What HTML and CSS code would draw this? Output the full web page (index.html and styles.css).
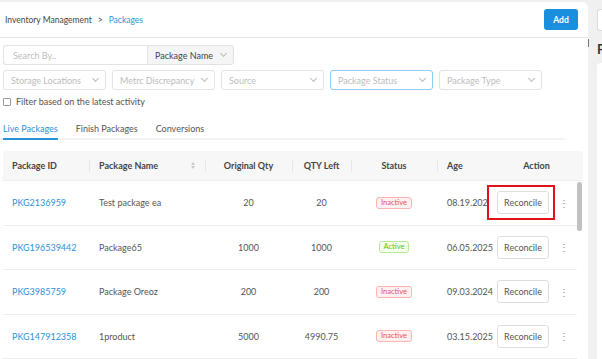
FILE: index.html
```html
<!DOCTYPE html>
<html>
<head>
<meta charset="utf-8">
<link rel="stylesheet" href="styles.css">
</head>
<body>
<div class="app">
  <main class="card">
    <header class="topbar">
      <div class="crumbs"><span>Inventory Management</span><span class="sep">&gt;</span><span class="current">Packages</span></div>
      <button class="btn-primary">Add</button>
    </header>

    <section class="filters">
      <div class="search-row">
        <div class="search-input">Search By..</div>
        <div class="search-select">Package Name <span class="chev"></span></div>
      </div>
      <div class="select-row">
        <div class="select">Storage Locations <span class="chev"></span></div>
        <div class="select">Metrc Discrepancy <span class="chev"></span></div>
        <div class="select">Source <span class="chev"></span></div>
        <div class="select focused">Package Status <span class="chev"></span></div>
        <div class="select">Package Type <span class="chev"></span></div>
      </div>
      <label class="check-row"><span class="checkbox"></span>Filter based on the latest activity</label>
    </section>

    <nav class="tabs">
      <span class="tab active">Live Packages</span>
      <span class="tab">Finish Packages</span>
      <span class="tab">Conversions</span>
    </nav>

    <div class="table-wrap">
      <div class="thead">
        <div class="th c-id">Package ID</div>
        <div class="th c-name">Package Name <span class="sorter"><i class="up"></i><i class="down"></i></span></div>
        <div class="th c-orig center">Original Qty</div>
        <div class="th c-left center">QTY Left</div>
        <div class="th c-status center">Status</div>
        <div class="th c-age">Age</div>
        <div class="th c-action center">Action</div>
      </div>
      <div class="tbody">
        <div class="rows">
          <div class="tr">
            <div class="td c-id link">PKG2136959</div>
            <div class="td c-name">Test package ea</div>
            <div class="td c-orig center">20</div>
            <div class="td c-left center">20</div>
            <div class="td c-status center"><span class="badge inactive">Inactive</span></div>
            <div class="td c-age">08.19.2024</div>
            <div class="td c-action"><span class="highlight"></span><button class="btn">Reconcile</button><span class="kebab">&#8942;</span></div>
          </div>
          <div class="tr">
            <div class="td c-id link">PKG196539442</div>
            <div class="td c-name">Package65</div>
            <div class="td c-orig center">1000</div>
            <div class="td c-left center">1000</div>
            <div class="td c-status center"><span class="badge active">Active</span></div>
            <div class="td c-age">06.05.2025</div>
            <div class="td c-action"><button class="btn">Reconcile</button><span class="kebab">&#8942;</span></div>
          </div>
          <div class="tr">
            <div class="td c-id link">PKG3985759</div>
            <div class="td c-name">Package Oreoz</div>
            <div class="td c-orig center">200</div>
            <div class="td c-left center">200</div>
            <div class="td c-status center"><span class="badge inactive">Inactive</span></div>
            <div class="td c-age">09.03.2024</div>
            <div class="td c-action"><button class="btn">Reconcile</button><span class="kebab">&#8942;</span></div>
          </div>
          <div class="tr">
            <div class="td c-id link">PKG147912358</div>
            <div class="td c-name">1product</div>
            <div class="td c-orig center">5000</div>
            <div class="td c-left center">4990.75</div>
            <div class="td c-status center"><span class="badge inactive">Inactive</span></div>
            <div class="td c-age">03.15.2025</div>
            <div class="td c-action"><button class="btn">Reconcile</button><span class="kebab">&#8942;</span></div>
          </div>
        </div>
        <div class="scrollbar"><div class="thumb"></div></div>
      </div>
    </div>
  </main>
  <div class="gutter"><span class="handle"></span></div>
  <aside class="side">
    <div class="side-input"></div>
    <div class="side-title">P</div>
    <div class="side-panel"></div>
  </aside>
</div>
</body>
</html>
```

FILE: styles.css
```css
* { box-sizing: border-box; }
html, body { margin: 0; padding: 0; }
body {
  background: #f0f0f0;
  font-family: "Lato", "Open Sans", sans-serif;
  font-size: 9px;
  color: #555;
  width: 602px;
  height: 359px;
  overflow: hidden;
}
.app {
  display: flex;
  height: 359px;
  padding-top: 2px;
}
.card {
  width: 588px;
  flex: none;
  background: #fff;
  border-top-right-radius: 6px;
  display: flex;
  flex-direction: column;
}
.topbar {
  height: 36px;
  display: flex;
  align-items: center;
  justify-content: space-between;
  padding: 0 10px 0 5px;
  border-bottom: 1px solid #e6e6e6;
}
.crumbs { display: flex; gap: 6px; color: #444; font-size: 8.5px; }
.crumbs .current { color: #2a93dc; }
.btn-primary {
  width: 34px;
  height: 21px;
  border: none;
  border-radius: 3px;
  background: #1a8fdd;
  color: #fff;
  font-family: inherit;
  font-size: 8.5px;
  font-weight: 700;
  padding: 0;
}
.filters {
  padding: 7px 3px 0;
  display: flex;
  flex-direction: column;
}
.search-row { display: flex; height: 20px; }
.search-input {
  width: 144px;
  border: 1px solid #e3e3e3;
  border-right: none;
  border-radius: 3px 0 0 3px;
  color: #bdbdbd;
  padding: 0 9px;
  display: flex;
  align-items: center;
}
.search-select {
  width: 87px;
  background: #f5f5f5;
  border: 1px solid #e3e3e3;
  border-radius: 0 3px 3px 0;
  color: #444;
  padding: 0 7px 0 7px;
  display: flex;
  align-items: center;
  justify-content: space-between;
}
.select-row { display: flex; gap: 6px; margin-top: 5px; }
.select {
  width: 103px;
  height: 20px;
  border: 1px solid #e3e3e3;
  border-radius: 3px;
  color: #bdbdbd;
  padding: 0 7px;
  display: flex;
  align-items: center;
  justify-content: space-between;
}
.select.focused { border-color: #8fcaf0; }
.chev {
  width: 5px;
  height: 5px;
  border-right: 1px solid #bbb;
  border-bottom: 1px solid #bbb;
  transform: rotate(45deg);
  margin-top: -3px;
}
.check-row {
  display: flex;
  align-items: center;
  gap: 5px;
  margin-top: 6px;
  height: 11px;
  color: #555;
}
.checkbox {
  width: 8px;
  height: 8px;
  border: 1px solid #999;
  border-radius: 1px;
}
.tabs {
  margin-top: 14px;
  margin-right: 23px;
  display: flex;
  gap: 18px;
  padding-left: 3px;
  border-bottom: 2px solid #f2f2f2;
  height: 19px;
}
.tab { color: #555; line-height: 15px; }
.tab.active {
  color: #2a93dc;
  border-bottom: 2px solid #2a93dc;
  margin-bottom: -2px;
}
.table-wrap {
  margin: 11px 5px 0 3px;
  display: flex;
  flex-direction: column;
}
.thead {
  display: flex;
  height: 30px;
  background: #f7f7f7;
  border-radius: 3px 3px 0 0;
  color: #444;
  font-weight: 700;
  border-bottom: 1px solid #f0f0f0;
}
.th {
  display: flex;
  align-items: center;
  position: relative;
}
.th.center { justify-content: center; }
.th + .th::before {
  content: "";
  position: absolute;
  left: 0;
  top: 9px;
  height: 12px;
  border-left: 1px solid #e6e6e6;
}
.th.c-action::before { display: none; }
.c-id { width: 86px; padding-left: 9px; flex: none; }
.c-name { width: 116px; padding-left: 10px; flex: none; }
.th.c-name { justify-content: space-between; padding-right: 10px; }
.c-orig { width: 87px; flex: none; }
.c-left { width: 59px; flex: none; }
.c-status { width: 86px; flex: none; }
.c-age { width: 53px; padding-left: 10px; flex: none; white-space: nowrap; }
.c-action { flex: 1; }
.sorter { display: flex; flex-direction: column; gap: 1px; }
.sorter i {
  width: 0;
  height: 0;
  border-left: 2.5px solid transparent;
  border-right: 2.5px solid transparent;
}
.sorter .up { border-bottom: 3px solid #c8c8c8; }
.sorter .down { border-top: 3px solid #c8c8c8; }
.tbody { display: flex; }
.rows { flex: 1; }
.tr {
  display: flex;
  height: 44.5px;
  border-bottom: 1px solid #eeeeee;
}
.td {
  display: flex;
  align-items: center;
  color: #555;
}
.td.center { justify-content: center; }
.td.link { color: #2a93dc; }
.td.c-action {
  position: relative;
  padding-left: 7px;
  gap: 10px;
}
.badge {
  height: 12px;
  padding: 0 4px;
  border-radius: 3px;
  font-size: 7.5px;
  line-height: 10px;
  border: 1px solid;
}
.badge.inactive { color: #e8505b; background: #fff1f0; border-color: #ffb4b4; }
.badge.active { color: #52c41a; background: #f6ffed; border-color: #b7eb8f; }
.btn {
  position: relative;
  z-index: 1;
  width: 52px;
  height: 23px;
  background: #fff;
  border: 1px solid #dedede;
  border-radius: 3px;
  font-family: inherit;
  font-size: 9px;
  color: #555;
  padding: 0;
}
.kebab { color: #888; font-size: 10px; }
.highlight {
  position: absolute;
  left: -3px;
  top: 4px;
  width: 68px;
  height: 35px;
  border: 2px solid #e3101c;
  background: #fff;
}
.scrollbar {
  width: 6px;
  flex: none;
  position: relative;
}
.thumb {
  position: absolute;
  top: 1px;
  left: 0;
  width: 5px;
  height: 49px;
  border-radius: 3px;
  background: #c1c1c1;
}
.gutter {
  width: 9px;
  flex: none;
  position: relative;
}
.handle {
  position: absolute;
  left: 0;
  top: 37px;
  height: 8px;
  border-left: 1px solid #777;
}
.side {
  flex: 1;
  display: flex;
  flex-direction: column;
  padding-top: 7px;
  overflow: hidden;
}
.side-input {
  height: 22px;
  background: #fff;
  border: 1px solid #dcdcdc;
  border-right: none;
  border-radius: 3px 0 0 3px;
}
.side-title {
  margin-top: 10px;
  font-weight: 700;
  font-size: 13px;
  color: #333;
  line-height: 16px;
}
.side-panel {
  margin-top: 6px;
  flex: 1;
  background: #fff;
  border-radius: 4px 0 0 0;
}
```
